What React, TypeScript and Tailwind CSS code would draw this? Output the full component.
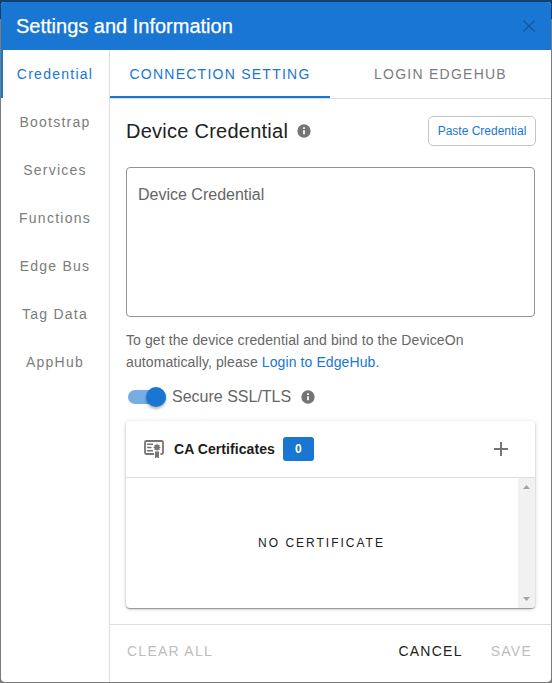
import React from "react";

const navItems = ["Credential", "Bootstrap", "Services", "Functions", "Edge Bus", "Tag Data", "AppHub"];

function InfoIcon() {
  return (
    <svg className="size-4 shrink-0" viewBox="0 0 24 24" fill="#757575">
      <path d="M12 2a10 10 0 1 0 0 20 10 10 0 0 0 0-20zm1.3 15h-2.6v-6h2.6zm0-8h-2.6V6.5h2.6z" />
    </svg>
  );
}

function CertificateIcon() {
  return (
    <svg className="h-[18px] w-5 shrink-0" viewBox="0 0 20 18" fill="none" stroke="#757575">
      <path d="M10 14H2.4A1.4 1.4 0 0 1 1 12.6V2.4A1.4 1.4 0 0 1 2.4 1h15.2A1.4 1.4 0 0 1 19 2.4v10.2a1.4 1.4 0 0 1-1.4 1.4H16.5" strokeWidth="1.8" />
      <path d="M3 4.3h6M3 7.5h4.5M3 10.7h6" strokeWidth="1.5" />
      <path d="M11 11.5h4V18.4l-2-1.1-2 1.1zM13 3.6l.9 1.5 1.8-.3-.4 1.7 1.5 1-1.5.9.4 1.8-1.8-.4-.9 1.4-.9-1.4-1.8.4.4-1.8-1.5-.9 1.5-1-.4-1.7 1.8.3z" fill="#757575" stroke="none" />
    </svg>
  );
}

export default function App() {
  return (
    <div className="h-[683px] w-[552px] bg-[linear-gradient(#104172_19px,#7b7b7b_19px)] px-px pt-0.5 pb-px font-['Liberation_Sans',Arial,sans-serif]">
      <div className="flex h-[680px] flex-col overflow-hidden rounded bg-white">
        <header className="flex h-12 shrink-0 items-center justify-between bg-[#1976d2] pr-4 pl-[15px]">
          <h1 className="text-[20px] leading-6 text-white [-webkit-text-stroke:0.25px_white]">Settings and Information</h1>
          <svg className="size-3" viewBox="0 0 12 12" stroke="#12569b" strokeWidth="1.2">
            <path d="M.5.5l11 11M11.5.5l-11 11" />
          </svg>
        </header>
        <div className="flex min-h-0 flex-1">
          <nav className="flex w-[109px] shrink-0 flex-col border-r border-[#dedede] text-[14px] tracking-[1.25px]">
            {navItems.map((label, i) => (
              <div
                key={label}
                className={`flex h-12 items-center justify-center ${
                  i === 0 ? "border-l-2 border-[#1976d2] pr-0.5 text-[#1976d2]" : "text-[#7c7c7c]"
                }`}
              >
                {label}
              </div>
            ))}
          </nav>
          <main className="flex min-w-0 flex-1 flex-col">
            <div className="flex h-[49px] shrink-0 border-b border-[#dedede] text-[14px] tracking-[1.25px]">
              <div className="flex h-12 w-[220px] items-center justify-center border-b-2 border-[#1976d2] pt-0.5 text-[#1976d2]">CONNECTION SETTING</div>
              <div className="flex h-12 flex-1 items-center justify-center text-[#7c7c7c]">LOGIN EDGEHUB</div>
            </div>
            <div className="flex flex-1 flex-col pt-[17px] pr-[15px] pl-4">
              <div className="flex h-[30px] items-center">
                <h2 className="text-[20px] leading-6 tracking-[0.25px] text-[#212121]">Device Credential</h2>
                <span className="ml-2"><InfoIcon /></span>
                <button className="ml-auto h-[30px] w-[108px] rounded-[5px] border border-[#c4c4c4] text-[12px] whitespace-nowrap text-[#1976d2]">Paste Credential</button>
              </div>
              <div className="mt-[21px] h-[150px] w-[409px] rounded-[4px] border border-[#949494] px-[11px] pt-[15px] text-[16px] leading-6 text-[#666]">Device Credential</div>
              <p className="mt-3 text-[14px] leading-[22px] tracking-[0.1px] text-[#666]">
                To get the device credential and bind to the DeviceOn
                <br />
                automatically, please <a className="text-[#1976d2]">Login to EdgeHub</a>.
              </p>
              <div className="mt-[14px] flex h-5 items-center pl-0.5">
                <div className="flex h-[14px] w-[38px] items-center justify-end rounded-full bg-[#75ade4]">
                  <div className="size-5 shrink-0 rounded-full bg-[#1976d2] shadow-[0_2px_3px_rgba(0,0,0,0.3)]" />
                </div>
                <span className="ml-[6px] text-[16px] text-[#666]">Secure SSL/TLS</span>
                <span className="ml-[9px]"><InfoIcon /></span>
              </div>
              <section className="mt-[14px] flex h-[187px] w-[409px] flex-col overflow-hidden rounded-[4px] shadow-[0_1px_1px_rgba(0,0,0,0.35),0_1px_4px_rgba(0,0,0,0.2)]">
                <div className="flex h-[57px] shrink-0 items-center border-b border-[#dedede] pl-[18px]">
                  <CertificateIcon />
                  <span className="ml-[10px] text-[14px] font-bold tracking-[0.07px] text-[#1d1d1d]">CA Certificates</span>
                  <span className="ml-2 flex h-6 w-[31px] items-center justify-center rounded-[3px] bg-[#1976d2] text-[12px] font-bold text-white">0</span>
                  <svg className="mr-[27px] ml-auto size-[14px]" viewBox="0 0 14 14" stroke="#757575" strokeWidth="2">
                    <path d="M0 7h14M7 0v14" />
                  </svg>
                </div>
                <div className="flex flex-1">
                  <div className="flex flex-1 items-center justify-center pr-px text-[12px] tracking-[2px] text-[#212121]">NO CERTIFICATE</div>
                  <div className="flex w-[17px] flex-col items-center justify-between bg-[#f1f1f1] py-[7px]">
                    <svg className="h-1 w-[7px]" viewBox="0 0 7 4" fill="#a3a3a3"><path d="M0 4L3.5 0 7 4z" /></svg>
                    <svg className="h-1 w-[7px]" viewBox="0 0 7 4" fill="#a3a3a3"><path d="M0 0l3.5 4L7 0z" /></svg>
                  </div>
                </div>
              </section>
            </div>
            <footer className="flex h-[58px] shrink-0 items-center border-t border-[#dedede] pr-[19px] pb-1 pl-[17px] text-[14px] tracking-[1.25px] text-[#bdbdbd]">
              <span>CLEAR ALL</span>
              <span className="ml-auto text-[#212121]">CANCEL</span>
              <span className="ml-7">SAVE</span>
            </footer>
          </main>
        </div>
      </div>
    </div>
  );
}
